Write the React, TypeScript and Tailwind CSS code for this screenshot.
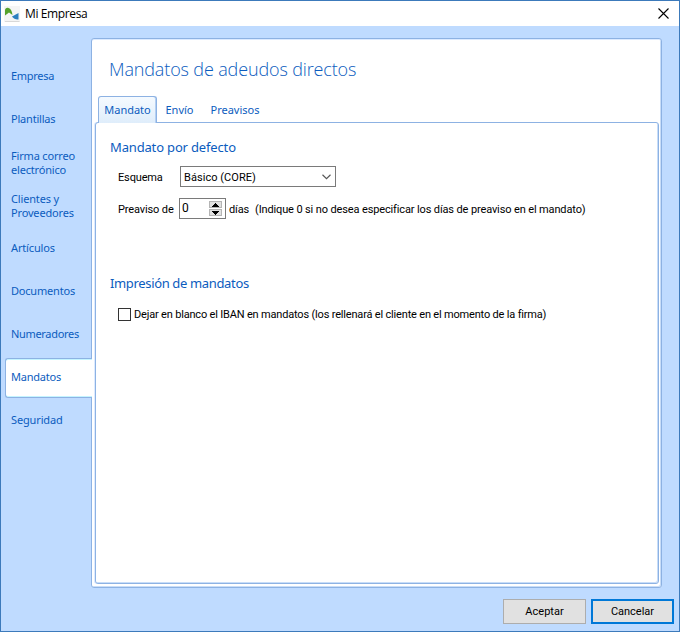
import { useState } from 'react'
import clsx from 'clsx'

const SECTIONS = [
    { id: 'empresa', lines: ['Empresa'], spacing: 'tracking-[-0.28px]' },
    { id: 'plantillas', lines: ['Plantillas'], spacing: 'tracking-[-0.2px]' },
    { id: 'firma', lines: ['Firma correo', 'electrónico'], spacing: 'tracking-[-0.18px]' },
    { id: 'clientes', lines: ['Clientes y', 'Proveedores'], spacing: 'tracking-[-0.16px]' },
    { id: 'articulos', lines: ['Artículos'], spacing: 'tracking-[-0.14px]' },
    { id: 'documentos', lines: ['Documentos'], spacing: 'tracking-[-0.2px]' },
    { id: 'numeradores', lines: ['Numeradores'], spacing: 'tracking-[-0.32px]' },
    { id: 'mandatos', lines: ['Mandatos'], spacing: 'tracking-[-0.22px]' },
    { id: 'seguridad', lines: ['Seguridad'], spacing: 'tracking-[-0.14px]' }
]

const TABS = [
    { label: 'Mandato', width: 'w-[59px]' },
    { label: 'Envío', width: 'w-[45px]' },
    { label: 'Preavisos', width: 'w-[66px]' }
]

function AppLogo() {
    return (
        <svg width="16" height="16" viewBox="0 0 16 16" className="ml-[3px] shrink-0">
            <rect width="16" height="16" fill="#f5f5f5" />
            <path d="M1 9.500V4.500C1 2.500 2.500 1.500 4.500 2C6.800 2.500 8 5 8.500 9L5 6.500Z" fill="#55a22b" />
            <path d="M8 10.500L14.500 7V13.500C12 14 9.500 12.500 8 10.500Z" fill="#2b7fc0" />
            <path d="M1 15.500H15.500" stroke="#d8d8d8" />
        </svg>
    )
}

function TitleBar() {
    return (
        <header className="flex h-[25px] shrink-0 items-center bg-white">
            <AppLogo />
            <h1 className="ml-[5px] font-['Open_Sans','Noto_Sans',sans-serif] text-[12px] leading-[16px] tracking-[-0.38px] text-black">Mi Empresa</h1>
            <button aria-label="Cerrar" className="mr-[10px] ml-auto">
                <svg width="11" height="11" viewBox="0 0 11 11" className="block">
                    <path d="M.5.5L10.500 10.500M10.500.5L.5 10.500" stroke="#000" strokeWidth="1.1" fill="none" />
                </svg>
            </button>
        </header>
    )
}

function Sidebar({ active, onSelect }: { active: string; onSelect: (id: string) => void }) {
    return (
        <nav className="z-10 -mr-px flex w-[87px] shrink-0 flex-col pt-[28px]">
            {SECTIONS.map(s => (
                <div key={s.id} className="h-[43px] pt-[3px]">
                    <button
                        onClick={() => onSelect(s.id)}
                        className={clsx(
                            'flex h-[40px] w-full flex-col justify-center border-y border-l pl-[5px] text-left text-[11px] leading-[14px] whitespace-nowrap',
                            s.lines.length === 1 && 'pb-[2px]',
                            s.spacing,
                            active === s.id
                                ? 'rounded-l-[3px] border-[#8db2e3] bg-white shadow-[inset_0_1px_#c4f4ff,inset_0_-1px_#c4f4ff]'
                                : 'border-transparent'
                        )}
                    >
                        {s.lines.map(line => <span key={line}>{line}</span>)}
                    </button>
                </div>
            ))}
        </nav>
    )
}

function Spinner({ value, onChange }: { value: number; onChange: (n: number) => void }) {
    return (
        <div className="flex h-[21px] w-[47px] shrink-0 border border-[#7a7a7a] bg-white pl-[2px]">
            <span className="w-[27px] text-[12px] leading-[18px]">{value}</span>
            <div className="flex flex-col gap-px pt-[2px]">
                <button aria-label="Más" onClick={() => onChange(value + 1)} className="flex h-[7px] w-[13px] items-center justify-center border border-[#b4b4b4] bg-[#e1e1e1]">
                    <svg width="7" height="4" viewBox="0 0 7 4" shapeRendering="crispEdges"><path d="M3 0H4V1H5V2H6V3H7V4H0V3H1V2H2V1H3Z" /></svg>
                </button>
                <button aria-label="Menos" onClick={() => onChange(Math.max(0, value - 1))} className="flex h-[7px] w-[13px] items-center justify-center border border-[#b4b4b4] bg-[#e1e1e1]">
                    <svg width="7" height="4" viewBox="0 0 7 4" shapeRendering="crispEdges"><path d="M0 0H7V1H6V2H5V3H4V4H3V3H2V2H1V1H0Z" /></svg>
                </button>
            </div>
        </div>
    )
}

function MandatoForm() {
    const [days, setDays] = useState(0)
    const [blank, setBlank] = useState(false)

    return (
        <div className="pt-[15px] pl-[14px]">
            <h3 className="text-[13px] leading-[18px] tracking-[-0.16px] text-[#0b5cbe]">Mandato por defecto</h3>
            <div className="pl-2 font-[Roboto,'Liberation_Sans',sans-serif] text-[11px] leading-[14px] whitespace-nowrap text-black">
                <div className="mt-[10px] flex h-[21px] items-center">
                    <span className="w-[62px] pt-[2px] tracking-[-0.15px]">Esquema</span>
                    <button className="flex h-[21px] w-[156px] items-center justify-between border border-[#7a7a7a] bg-white pr-1 pl-[3px]">
                        <span className="pt-[2px] tracking-[0.05px]">Básico (CORE)</span>
                        <svg width="9" height="6" viewBox="0 0 9 6" fill="none"><path d="M.5.75L4.500 4.750L8.500.75" stroke="#555" strokeWidth="1.1" /></svg>
                    </button>
                </div>
                <div className="mt-[11px] flex h-[21px] items-center tracking-[-0.13px]">
                    <span className="w-[61px] pt-[2px]">Preaviso de</span>
                    <Spinner value={days} onChange={setDays} />
                    <span className="ml-[3px] w-[26px] pt-[2px]">días</span>
                    <span className="pt-[2px]">(Indique 0 si no desea especificar los días de preaviso en el mandato)</span>
                </div>
            </div>
            <h3 className="mt-[55px] text-[13px] leading-[18px] tracking-[-0.35px] text-[#0b5cbe]">Impresión de mandatos</h3>
            <label className="mt-[15px] ml-2 flex h-[14px] items-center font-[Roboto,'Liberation_Sans',sans-serif] text-[11px] leading-[14px] tracking-[-0.18px] whitespace-nowrap text-black">
                <input
                    type="checkbox"
                    checked={blank}
                    onChange={e => setBlank(e.target.checked)}
                    className="size-[13px] shrink-0 appearance-none border border-[#333] bg-white checked:bg-[#333]"
                />
                <span className="ml-[3px] pt-[2px]">Dejar en blanco el IBAN en mandatos (los rellenará el cliente en el momento de la firma)</span>
            </label>
        </div>
    )
}

export default function App() {
    const [section, setSection] = useState('mandatos')
    const [tab, setTab] = useState('Mandato')

    return (
        <div className="flex h-[632px] w-[680px] flex-col border border-[#3c7abb] bg-[#bfdbff] font-['Noto_Sans','Open_Sans',sans-serif] text-[#0b5cbe]">
            <TitleBar />
            <div className="flex h-[562px] shrink-0 pl-1">
                <Sidebar active={section} onSelect={setSection} />
                <main className="mt-[12px] flex h-[550px] w-[571px] flex-col rounded-[3px] border border-[#8db2e3] bg-white pr-[2px] pb-[3px] pl-[3px] shadow-[inset_0_1px_#dceaff,inset_-1px_-1px_#c8ddf8]">
                    <h2 className="mt-[17px] ml-[14px] h-[26px] font-['Open_Sans','Noto_Sans',sans-serif] text-[18px] leading-[26px] font-light tracking-[-0.14px]">Mandatos de adeudos directos</h2>
                    <div className="z-10 mt-[14px] -mb-px ml-[3px] flex h-[27px] text-[11px]">
                        {TABS.map(t => (
                            <button
                                key={t.label}
                                onClick={() => setTab(t.label)}
                                className={clsx(
                                    'h-[27px] border-x border-t text-center',
                                    t.width,
                                    tab === t.label
                                        ? 'rounded-t-[3px] border-[#8db2e3] bg-linear-to-b from-[#f5faff] to-[#dfedfb] shadow-[inset_-1px_0_#b5d0f2]'
                                        : 'border-transparent'
                                )}
                            >
                                {t.label}
                            </button>
                        ))}
                    </div>
                    <section className="min-h-0 flex-1 rounded-[3px] border border-[#8db2e3] bg-white shadow-[-1px_0_#dceaff,inset_-1px_-1px_#c8ddf8]">
                        <MandatoForm />
                    </section>
                </main>
            </div>
            <footer className="flex gap-[5px] pt-[11px] pl-[502px] font-[Roboto,'Liberation_Sans',sans-serif] text-[11px] text-black">
                <button className="h-[25px] w-[83px] border border-[#adadad] bg-[#e1e1e1] pt-[2px]">Aceptar</button>
                <button className="h-[25px] w-[83px] border-2 border-[#0078d7] bg-[#e1e1e1] pt-[2px]">Cancelar</button>
            </footer>
        </div>
    )
}
